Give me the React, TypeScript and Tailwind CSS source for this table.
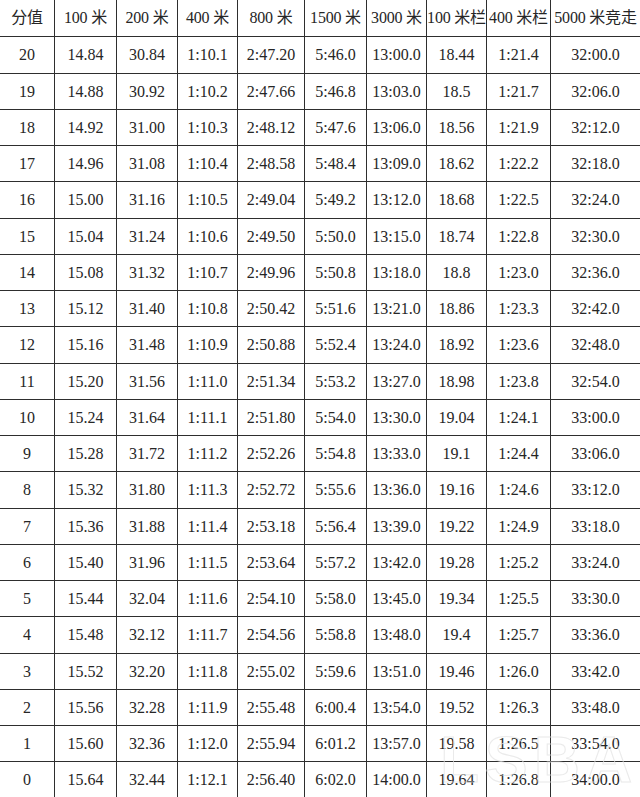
const head = ["分值", "100 米", "200 米", "400 米", "800 米", "1500 米", "3000 米", "100 米栏", "400 米栏", "5000 米竞走"];

const rows = [
  ["20", "14.84", "30.84", "1:10.1", "2:47.20", "5:46.0", "13:00.0", "18.44", "1:21.4", "32:00.0"],
  ["19", "14.88", "30.92", "1:10.2", "2:47.66", "5:46.8", "13:03.0", "18.5", "1:21.7", "32:06.0"],
  ["18", "14.92", "31.00", "1:10.3", "2:48.12", "5:47.6", "13:06.0", "18.56", "1:21.9", "32:12.0"],
  ["17", "14.96", "31.08", "1:10.4", "2:48.58", "5:48.4", "13:09.0", "18.62", "1:22.2", "32:18.0"],
  ["16", "15.00", "31.16", "1:10.5", "2:49.04", "5:49.2", "13:12.0", "18.68", "1:22.5", "32:24.0"],
  ["15", "15.04", "31.24", "1:10.6", "2:49.50", "5:50.0", "13:15.0", "18.74", "1:22.8", "32:30.0"],
  ["14", "15.08", "31.32", "1:10.7", "2:49.96", "5:50.8", "13:18.0", "18.8", "1:23.0", "32:36.0"],
  ["13", "15.12", "31.40", "1:10.8", "2:50.42", "5:51.6", "13:21.0", "18.86", "1:23.3", "32:42.0"],
  ["12", "15.16", "31.48", "1:10.9", "2:50.88", "5:52.4", "13:24.0", "18.92", "1:23.6", "32:48.0"],
  ["11", "15.20", "31.56", "1:11.0", "2:51.34", "5:53.2", "13:27.0", "18.98", "1:23.8", "32:54.0"],
  ["10", "15.24", "31.64", "1:11.1", "2:51.80", "5:54.0", "13:30.0", "19.04", "1:24.1", "33:00.0"],
  ["9", "15.28", "31.72", "1:11.2", "2:52.26", "5:54.8", "13:33.0", "19.1", "1:24.4", "33:06.0"],
  ["8", "15.32", "31.80", "1:11.3", "2:52.72", "5:55.6", "13:36.0", "19.16", "1:24.6", "33:12.0"],
  ["7", "15.36", "31.88", "1:11.4", "2:53.18", "5:56.4", "13:39.0", "19.22", "1:24.9", "33:18.0"],
  ["6", "15.40", "31.96", "1:11.5", "2:53.64", "5:57.2", "13:42.0", "19.28", "1:25.2", "33:24.0"],
  ["5", "15.44", "32.04", "1:11.6", "2:54.10", "5:58.0", "13:45.0", "19.34", "1:25.5", "33:30.0"],
  ["4", "15.48", "32.12", "1:11.7", "2:54.56", "5:58.8", "13:48.0", "19.4", "1:25.7", "33:36.0"],
  ["3", "15.52", "32.20", "1:11.8", "2:55.02", "5:59.6", "13:51.0", "19.46", "1:26.0", "33:42.0"],
  ["2", "15.56", "32.28", "1:11.9", "2:55.48", "6:00.4", "13:54.0", "19.52", "1:26.3", "33:48.0"],
  ["1", "15.60", "32.36", "1:12.0", "2:55.94", "6:01.2", "13:57.0", "19.58", "1:26.5", "33:54.0"],
  ["0", "15.64", "32.44", "1:12.1", "2:56.40", "6:02.0", "14:00.0", "19.64", "1:26.8", "34:00.0"],
];

const cols = "grid grid-cols-[55px_62px_61px_60px_67px_62px_60px_60px_64px_89px]";

function Cell({ text, last }: { text: string; last: boolean }) {
  return (
    <div
      className={
        "flex items-center justify-center whitespace-nowrap border-b border-[#2e2e2e] " +
        (last ? "" : "border-r")
      }
    >
      {text}
    </div>
  );
}

export default function App() {
  return (
    <div className="relative w-[640px] h-[797px] overflow-hidden bg-white text-[16px] text-[#262626] [font-family:'Liberation_Serif','Noto_Sans_CJK_SC',serif]">
      {/* header */}
      <div className={cols + " h-[37px] tracking-[-0.2px]"}>
        {head.map((h, i) => (
          <Cell key={h} text={h} last={i === head.length - 1} />
        ))}
      </div>

      {rows.map((r, ri) => (
        <div key={r[0]} className={cols + " " + (ri % 4 === 0 ? "h-[37px]" : "h-9")}>
          {r.map((c, ci) => (
            <Cell key={ci} text={c} last={ci === r.length - 1} />
          ))}
        </div>
      ))}

      {/* faint watermark */}
      <div className="pointer-events-none absolute left-[440px] top-[712px] text-[64px] font-bold tracking-[6px] text-transparent [-webkit-text-stroke:1px_#e2e2e2] opacity-70 [font-family:'Liberation_Sans',sans-serif]">
        LSBA
      </div>
    </div>
  );
}
